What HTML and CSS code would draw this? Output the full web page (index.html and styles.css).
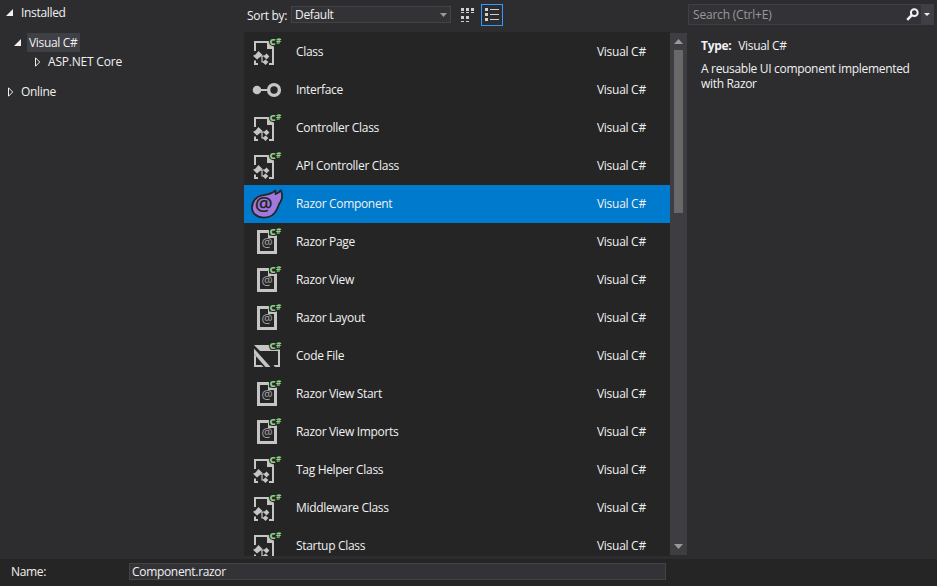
FILE: index.html
```html
<!DOCTYPE html>
<html lang="en">
<head>
  <meta charset="UTF-8">
  <title>Add New Item</title>
  <link rel="stylesheet" href="styles.css">
</head>
<body>

  <!-- shared item icons -->
  <svg class="sprite" width="0" height="0">
    <symbol id="icon-class" viewBox="0 0 34 34">
      <path class="line" d="M5 15V6H17.5L23 12V28H19"/>
      <path class="fill" d="M17 5H19L24 11V13H17Z"/>
      <path class="fill" d="M8.5 15L12.5 19L7 23.5L3 19.7L5.5 18.5Z"/>
      <path class="thin" d="M9 20H17M12 20V26H15"/>
      <path class="fill" d="M13.6 20.5L16.5 17.6L19.4 20.5L16.5 23.4ZM12.6 26L15.5 23.4L18.4 26L15.5 29ZM4 24.5H6V27H8V29H4Z"/>
    </symbol>
    <symbol id="icon-interface" viewBox="0 0 34 34">
      <circle class="fill" cx="7" cy="16" r="4.3"/>
      <path class="line" d="M10 16H18"/>
      <circle class="ring" cx="24" cy="16" r="5.4"/>
    </symbol>
    <symbol id="icon-page" viewBox="0 0 34 34">
      <path class="fill" d="M7 4H19V9.5H27V28H7ZM10 7V25H24V12H18V7Z" fill-rule="evenodd"/>
    </symbol>
    <symbol id="icon-code" viewBox="0 0 34 34">
      <path class="fill" d="M4 5H20V9.5H30V27H25L23.5 25H28V11H10Z"/>
      <path class="fill" d="M4 8.5L20.5 27H15.5L4 14Z"/>
      <path class="fill" d="M4 14L6 16.5V25H11.5L13.5 27H4Z"/>
    </symbol>
    <symbol id="icon-razor" viewBox="0 0 34 34">
      <path class="flame" d="M2 19.5C2 13 6.5 8.3 12 7.3C17 6.5 21.5 6.3 25.2 2.6C25.8 3.8 25.8 5 25.5 6.2C27.8 5.5 29.6 4.2 30.8 2.3C32.6 6 32.6 10 30.5 13.8L29.2 15.8C28.6 17.5 28.3 18.5 27.3 20.5C25 26 20 29.6 14 29.6C7 29.6 2 25.5 2 19.5Z"/>
    </symbol>
  </svg>

  <div class="dialog">
    <div class="content">

      <div class="tree">
        <div class="node installed">
          <svg class="arrow" width="8" height="8"><path d="M7 0V7H0Z" fill="#f1f1f1"/></svg>
          <span class="label">Installed</span>
        </div>
        <div class="node language">
          <svg class="arrow" width="8" height="8"><path d="M7 0V7H0Z" fill="#f1f1f1"/></svg>
          <span class="label selected">Visual C#</span>
        </div>
        <div class="node aspnet">
          <svg class="arrow" width="8" height="10"><path d="M1.5 .8V9.2L5.7 5Z" fill="none" stroke="#f1f1f1"/></svg>
          <span class="label">ASP.NET Core</span>
        </div>
        <div class="node online">
          <svg class="arrow" width="8" height="10"><path d="M1.5 .8V9.2L5.7 5Z" fill="none" stroke="#f1f1f1"/></svg>
          <span class="label">Online</span>
        </div>
      </div>

      <div class="middle">
        <div class="toolbar">
          <span class="sort-label">Sort by:</span>
          <div class="select">
            <span>Default</span>
            <svg width="7" height="4"><path d="M0 0H7L3.5 4Z" fill="#999"/></svg>
          </div>
          <svg class="grid-view" width="14" height="14" fill="#d0d0d0">
            <path d="M0 0H3V3H0ZM5 0H8V3H5ZM10 0H13V3H10ZM0 8H3V11H0ZM5 8H8V11H5Z"/>
            <path d="M0 4H3V5H0ZM5 4H8V5H5ZM10 4H13V5H10ZM0 13H3V14H0ZM5 13H8V14H5Z"/>
          </svg>
          <div class="list-view">
            <svg width="14" height="13" fill="#d0d0d0">
              <path d="M0 0H3V3H0ZM0 5H3V8H0ZM0 10H3V13H0ZM5 1H14V2H5ZM5 6H14V7H5ZM5 11H14V12H5Z"/>
            </svg>
          </div>
        </div>

        <div class="list-area">
          <div class="list">
            <div class="item">
              <svg class="icon"><use href="#icon-class"/><text class="lang" x="19.6" y="9">C</text><text class="sharp" x="26" y="8">#</text></svg>
              <span class="name">Class</span><span class="type">Visual C#</span>
            </div>
            <div class="item">
              <svg class="icon"><use href="#icon-interface"/></svg>
              <span class="name">Interface</span><span class="type">Visual C#</span>
            </div>
            <div class="item">
              <svg class="icon"><use href="#icon-class"/><text class="lang" x="19.6" y="9">C</text><text class="sharp" x="26" y="8">#</text></svg>
              <span class="name">Controller Class</span><span class="type">Visual C#</span>
            </div>
            <div class="item">
              <svg class="icon"><use href="#icon-class"/><text class="lang" x="19.6" y="9">C</text><text class="sharp" x="26" y="8">#</text></svg>
              <span class="name">API Controller Class</span><span class="type">Visual C#</span>
            </div>
            <div class="item active">
              <svg class="icon"><use href="#icon-razor"/><text class="at-big" x="13.8" y="23.4">@</text></svg>
              <span class="name">Razor Component</span><span class="type">Visual C#</span>
            </div>
            <div class="item">
              <svg class="icon"><use href="#icon-page"/><text class="at" x="17" y="21">@</text><text class="lang" x="19.6" y="9">C</text><text class="sharp" x="26" y="8">#</text></svg>
              <span class="name">Razor Page</span><span class="type">Visual C#</span>
            </div>
            <div class="item">
              <svg class="icon"><use href="#icon-page"/><text class="at" x="17" y="21">@</text><text class="lang" x="19.6" y="9">C</text><text class="sharp" x="26" y="8">#</text></svg>
              <span class="name">Razor View</span><span class="type">Visual C#</span>
            </div>
            <div class="item">
              <svg class="icon"><use href="#icon-page"/><text class="at" x="17" y="21">@</text><text class="lang" x="19.6" y="9">C</text><text class="sharp" x="26" y="8">#</text></svg>
              <span class="name">Razor Layout</span><span class="type">Visual C#</span>
            </div>
            <div class="item">
              <svg class="icon"><use href="#icon-code"/><text class="lang" x="19.6" y="9">C</text><text class="sharp" x="26" y="8">#</text></svg>
              <span class="name">Code File</span><span class="type">Visual C#</span>
            </div>
            <div class="item">
              <svg class="icon"><use href="#icon-page"/><text class="at" x="17" y="21">@</text><text class="lang" x="19.6" y="9">C</text><text class="sharp" x="26" y="8">#</text></svg>
              <span class="name">Razor View Start</span><span class="type">Visual C#</span>
            </div>
            <div class="item">
              <svg class="icon"><use href="#icon-page"/><text class="at" x="17" y="21">@</text><text class="lang" x="19.6" y="9">C</text><text class="sharp" x="26" y="8">#</text></svg>
              <span class="name">Razor View Imports</span><span class="type">Visual C#</span>
            </div>
            <div class="item">
              <svg class="icon"><use href="#icon-class"/><text class="lang" x="19.6" y="9">C</text><text class="sharp" x="26" y="8">#</text></svg>
              <span class="name">Tag Helper Class</span><span class="type">Visual C#</span>
            </div>
            <div class="item">
              <svg class="icon"><use href="#icon-class"/><text class="lang" x="19.6" y="9">C</text><text class="sharp" x="26" y="8">#</text></svg>
              <span class="name">Middleware Class</span><span class="type">Visual C#</span>
            </div>
            <div class="item">
              <svg class="icon"><use href="#icon-class"/><text class="lang" x="19.6" y="9">C</text><text class="sharp" x="26" y="8">#</text></svg>
              <span class="name">Startup Class</span><span class="type">Visual C#</span>
            </div>
          </div>
          <div class="scrollbar">
            <svg width="9" height="5"><path d="M0 5H9L4.5 0Z" fill="#999"/></svg>
            <div class="thumb"></div>
            <svg class="down" width="9" height="5"><path d="M0 0H9L4.5 5Z" fill="#999"/></svg>
          </div>
        </div>
      </div>

      <div class="details">
        <div class="search">
          <span class="placeholder">Search (Ctrl+E)</span>
          <svg class="magnifier" width="13" height="13" fill="none" stroke="#f1f1f1">
            <circle cx="8.3" cy="4.7" r="3.4" stroke-width="2"/>
            <path d="M5.8 7.2L1.2 11.8" stroke-width="2.6"/>
          </svg>
          <div class="search-menu">
            <svg width="6" height="3"><path d="M0 0H6L3 3Z" fill="#f1f1f1"/></svg>
          </div>
        </div>
        <div class="type-row"><b>Type:</b><span>Visual C#</span></div>
        <p class="description">A reusable UI component implemented<br>with Razor</p>
      </div>

    </div>

    <div class="footer">
      <span class="name-label">Name:</span>
      <div class="name-input">Component.razor</div>
    </div>
  </div>

</body>
</html>
```
FILE: styles.css
```css
* {
  box-sizing: border-box;
}

body {
  margin: 0;
  background-color: #2d2d30;
  color: #f1f1f1;
  font-family: "Open Sans", "Noto Sans", sans-serif;
  font-size: 12px;
  line-height: 16px;
  letter-spacing: -0.32px;
  white-space: nowrap;
}

svg {
  display: block;
  flex: none;
}

.sprite {
  position: absolute;
}

.dialog {
  display: flex;
  flex-direction: column;
  width: 937px;
  height: 586px;
  overflow: hidden;
}

.content {
  display: flex;
  height: 559px;
}

/* left tree */
.tree {
  width: 244px;
  padding-top: 3px;
}

.node {
  display: flex;
  align-items: center;
  height: 19px;
}

.label {
  padding: 0 2px;
  line-height: 19px;
}

.selected {
  background-color: #3f3f46;
}

.installed {
  padding-left: 6px;
}

.installed .label {
  margin-left: 5px;
}

.language {
  margin-top: 11px;
  padding-left: 14px;
}

.language .label {
  margin-left: 5px;
}

.aspnet {
  padding-left: 34px;
}

.aspnet .label {
  margin-left: 4px;
  letter-spacing: -0.2px;
}

.online {
  margin-top: 11px;
  padding-left: 7px;
}

.online .label {
  margin-left: 4px;
}

/* middle list */
.middle {
  width: 443px;
}

.toolbar {
  display: flex;
  align-items: flex-start;
  height: 32px;
  padding: 4px 0 0 3px;
}

.sort-label {
  width: 44px;
  padding-top: 4px;
}

.select {
  display: flex;
  align-items: center;
  justify-content: space-between;
  width: 160px;
  height: 17px;
  margin-top: 2px;
  padding: 0 3px;
  border: 1px solid #434346;
  background-color: #333337;
}

.grid-view {
  margin: 4px 0 0 10px;
}

.list-view {
  width: 22px;
  height: 22px;
  margin-left: 6px;
  padding: 3px;
  border: 1px solid #3399ff;
}

.list-area {
  display: flex;
  height: 524px;
}

.list {
  width: 426px;
  padding-top: 1px;
  background-color: #252526;
  overflow: hidden;
}

.item {
  display: flex;
  align-items: center;
  height: 38px;
  padding-left: 6px;
}

.active {
  background-color: #007acc;
}

.icon {
  width: 34px;
  height: 34px;
  margin-top: 2px;
  overflow: visible;
}

.name {
  width: 301px;
  margin-left: 12px;
}

.type {
  letter-spacing: -0.28px;
}

.scrollbar {
  display: flex;
  flex-direction: column;
  align-items: center;
  width: 17px;
  height: 522px;
  margin-top: 1px;
  padding: 6px 0;
  background-color: #3e3e42;
}

.thumb {
  width: 9px;
  height: 163px;
  margin-top: 6px;
  background-color: #686868;
}

.down {
  margin-top: auto;
}

.fill {
  fill: #c5c5c5;
}

.line,
.thin,
.ring {
  fill: none;
  stroke: #c5c5c5;
  stroke-width: 2;
}

.thin {
  stroke-width: 1.2;
}

.ring {
  stroke-width: 3.4;
}

.lang,
.sharp,
.at,
.at-big {
  letter-spacing: 0;
}

.lang {
  fill: #89d185;
  stroke: #252526;
  stroke-width: 2px;
  paint-order: stroke;
  font-size: 9.5px;
  font-weight: 800;
}

.sharp {
  fill: #89d185;
  font-size: 8px;
  font-weight: 700;
}

.at {
  fill: #a8a8a8;
  font-size: 12.5px;
  text-anchor: middle;
}

.at-big {
  fill: #252526;
  font-size: 20px;
  font-weight: 600;
  text-anchor: middle;
}

.flame {
  fill: #a179dc;
  stroke: #252526;
  stroke-width: 1.8;
  stroke-linejoin: round;
}

/* right panel */
.details {
  width: 250px;
  padding: 4px 3px 0 1px;
}

.search {
  display: flex;
  align-items: center;
  height: 21px;
  padding-left: 4px;
  border: 1px solid #3f3f46;
  background-color: #333337;
}

.placeholder {
  color: #999;
  letter-spacing: -0.2px;
}

.magnifier {
  margin-left: auto;
}

.search-menu {
  display: flex;
  align-items: center;
  justify-content: center;
  width: 12px;
  height: 19px;
  margin-left: 2px;
  background-color: #3f3f46;
}

.type-row {
  display: flex;
  gap: 7px;
  margin: 13px 0 0 13px;
}

.description {
  margin: 7px 0 0 13px;
  line-height: 15px;
}

/* bottom bar */
.footer {
  display: flex;
  height: 27px;
  padding: 4px 0 0 11px;
  background-color: #252526;
}

.name-label {
  width: 118px;
  padding-top: 1px;
}

.name-input {
  width: 537px;
  height: 17px;
  padding: 0 2px;
  border: 1px solid #434346;
  background-color: #333337;
  line-height: 15px;
}
```
